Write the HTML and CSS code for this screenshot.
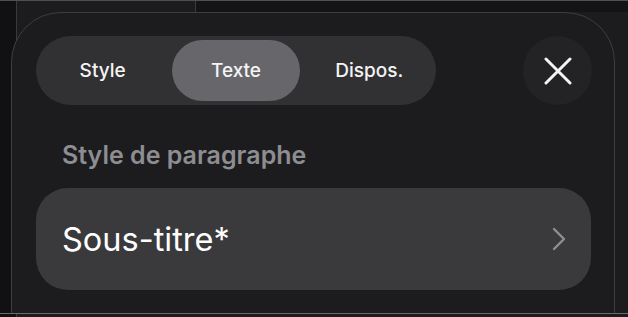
FILE: index.html
```html
<!DOCTYPE html>
<html lang="fr">
<head>
<meta charset="utf-8">
<title>Format</title>
<link rel="stylesheet" href="styles.css">
</head>
<body>
<div class="stage">
  <div class="backdrop">
    <div class="strip"></div>
    <div class="main">
      <div class="topbar">
        <div class="top-left"></div>
        <div class="top-right"></div>
      </div>
    </div>
  </div>
  <div class="sheet-clip">
    <div class="sheet">
      <div class="header">
        <div class="seg">
          <div class="seg-item">Style</div>
          <div class="seg-item active">Texte</div>
          <div class="seg-item">Dispos.</div>
        </div>
        <div class="close">
          <svg width="28" height="28" viewBox="0 0 28 28" aria-hidden="true">
            <path d="M2 2 L26 26 M26 2 L2 26" stroke="#f4f4f5" stroke-width="3" stroke-linecap="round" fill="none"/>
          </svg>
        </div>
      </div>
      <div class="label">Style de paragraphe</div>
      <div class="row">
        <span class="row-text">Sous-titre*</span>
        <svg class="chev" width="14" height="24" viewBox="0 0 14 24" aria-hidden="true">
          <path d="M2 2 L12 12 L2 22" stroke="#8e8e93" stroke-width="2.4" stroke-linecap="round" stroke-linejoin="round" fill="none"/>
        </svg>
      </div>
    </div>
  </div>
  <div class="edge"></div>
</div>
</body>
</html>
```

FILE: styles.css
```css
* { box-sizing: border-box; }
html, body { margin: 0; padding: 0; background: #111113; }
body { font-family: Inter, "Noto Sans", sans-serif; }

.stage {
  width: 628px;
  height: 317px;
  display: grid;
  grid-template-columns: 628px;
  grid-template-rows: 313px 1px 3px;
  overflow: hidden;
}

.backdrop {
  grid-row: 1 / 4;
  grid-column: 1;
  display: flex;
  border-top: 1px solid #505053;
}
.strip {
  width: 17px;
  background: #111113;
  border-right: 1px solid #3a3a3c;
}
.main {
  flex: 1;
  background: #1c1c1e;
}
.topbar {
  display: flex;
  height: 11px;
}
.top-left { width: 178px; }
.top-right {
  flex: 1;
  background: #141416;
  border-left: 1px solid #3a3a3c;
}

.sheet-clip {
  grid-row: 1;
  grid-column: 1;
  overflow: hidden;
  padding: 12px 13px 0 11px;
}
.sheet {
  height: 400px;
  background: #1c1c1e;
  border: 1px solid #3e3e41;
  border-radius: 50px;
  padding: 23px 22px 0 24px;
}

.header {
  display: flex;
  justify-content: space-between;
  align-items: center;
  height: 69px;
}
.seg {
  width: 400px;
  height: 69px;
  border-radius: 35px;
  background: #313134;
  display: grid;
  grid-template-columns: repeat(3, 1fr);
}
.seg-item {
  display: flex;
  align-items: center;
  justify-content: center;
  color: #f4f4f5;
  font-size: 19px;
  font-weight: 500;
  margin: 4px 3px;
  border-radius: 31px;
}
.seg-item.active { background: #67676b; }

.close {
  width: 69px;
  height: 69px;
  border-radius: 50%;
  background: #232325;
  display: flex;
  align-items: center;
  justify-content: center;
}

.label {
  margin-top: 35px;
  padding-left: 26px;
  font-size: 25px;
  line-height: 30px;
  font-weight: 600;
  color: #8d8d92;
}

.row {
  margin-top: 18px;
  margin-right: 1px;
  height: 102px;
  border-radius: 32px;
  background: #3a3a3c;
  padding: 0 25px 0 26px;
  display: flex;
  justify-content: space-between;
  align-items: center;
}
.row-text {
  font-size: 32.5px;
  font-weight: 400;
  color: #ffffff;
}

.edge {
  grid-row: 2;
  grid-column: 1;
  background: #6a6a6d;
}
```
